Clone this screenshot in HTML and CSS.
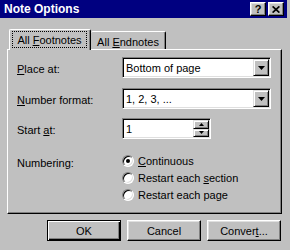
FILE: index.html
```html
<!DOCTYPE html>
<html>
<head>
<meta charset="utf-8">
<link rel="stylesheet" href="styles.css">
</head>
<body>
<div class="window">
  <div class="titlebar">
    <span class="title">Note Options</span>
    <div class="caption-btns">
      <span class="cbtn help">?</span>
      <span class="cbtn close"><svg width="8" height="7" viewBox="0 0 8 7"><path d="M0.6 0.4L7.4 6.6M7.4 0.4L0.6 6.6" stroke="#000" stroke-width="1.7" fill="none"/></svg></span>
    </div>
  </div>
  <div class="tabs">
    <div class="tab active"><span class="focus"><span>All <u>F</u>ootnotes</span></span></div>
    <div class="tab second"><span>All <u>E</u>ndnotes</span></div>
  </div>
  <div class="panel">
    <div class="row r1">
      <span class="lbl"><u>P</u>lace at:</span>
      <div class="field combo"><span class="val">Bottom of page</span><span class="drop"><svg width="7" height="4" viewBox="0 0 7 4"><path d="M0 0H7L3.5 4Z" fill="#000"/></svg></span></div>
    </div>
    <div class="row r2">
      <span class="lbl"><u>N</u>umber format:</span>
      <div class="field combo"><span class="val">1, 2, 3, ...</span><span class="drop"><svg width="7" height="4" viewBox="0 0 7 4"><path d="M0 0H7L3.5 4Z" fill="#000"/></svg></span></div>
    </div>
    <div class="row r3">
      <span class="lbl">Start <u>a</u>t:</span>
      <div class="field spin"><span class="val">1</span>
        <span class="spins">
          <span class="sbtn up"><svg width="5" height="3" viewBox="0 0 5 3"><path d="M0 3H5L2.5 0Z" fill="#000"/></svg></span>
          <span class="sbtn down"><svg width="5" height="3" viewBox="0 0 5 3"><path d="M0 0H5L2.5 3Z" fill="#000"/></svg></span>
        </span>
      </div>
    </div>
    <div class="row numbering">
      <span class="lbl">Numbering:</span>
      <div class="radios">
        <div class="radio"><span class="circle on"></span><span><u>C</u>ontinuous</span></div>
        <div class="radio"><span class="circle"></span><span>Restart each <u>s</u>ection</span></div>
        <div class="radio"><span class="circle"></span><span>Restart each pa<u>g</u>e</span></div>
      </div>
    </div>
  </div>
  <div class="buttons">
    <div class="btn default"><span>OK</span></div>
    <div class="btn"><span>Cancel</span></div>
    <div class="btn"><span>Conver<u>t</u>...</span></div>
  </div>
</div>
</body>
</html>
```
FILE: styles.css
```css
body {
  margin: 0;
  background: #c0c0c0;
  font-family: "Liberation Sans", Arial, sans-serif;
  font-size: 11px;
  color: #000;
}

.window {
  width: 290px;
  height: 250px;
  background: #c0c0c0;
  overflow: hidden;
}

.titlebar {
  height: 18px;
  margin-right: 3px;
  background: #000080;
  display: flex;
  align-items: center;
  justify-content: space-between;
  padding: 0 3px 0 4px;
}

.title {
  color: #fff;
  font-weight: bold;
  font-size: 12px;
}

.caption-btns {
  display: flex;
  gap: 2px;
}

.cbtn {
  box-sizing: border-box;
  width: 16px;
  height: 14px;
  background: #c0c0c0;
  border: 1px solid;
  border-color: #fff #000 #000 #fff;
  box-shadow: inset -1px -1px #808080, inset 1px 1px #dfdfdf;
  display: flex;
  align-items: center;
  justify-content: center;
}

.help {
  font-weight: bold;
  font-size: 11px;
  line-height: 12px;
}

.tabs {
  display: flex;
  align-items: flex-end;
  height: 21px;
  margin: 11px 0 -1px 9px;
  position: relative;
  z-index: 1;
}

.tab {
  box-sizing: border-box;
  height: 18px;
  margin-bottom: 1px;
  background: #c0c0c0;
  border-top: 1px solid #fff;
  border-left: 1px solid #fff;
  border-right: 1px solid #000;
  box-shadow: inset -1px 0 #808080;
  border-radius: 2px 2px 0 0;
  display: flex;
  justify-content: center;
  align-items: center;
}

.tab.active {
  width: 82px;
  height: 21px;
  margin-bottom: 0;
  align-items: flex-start;
  justify-content: flex-start;
  padding-top: 1px;
}

.tab.second {
  width: 75px;
  padding-top: 2px;
  border-left: none;
}

.focus {
  box-sizing: border-box;
  width: 75px;
  height: 17px;
  margin-left: 2px;
  border: 1px dotted #000;
  display: flex;
  align-items: center;
  justify-content: center;
  padding-top: 1px;
}

.panel {
  box-sizing: border-box;
  width: 275px;
  height: 165px;
  margin-left: 7px;
  border-top: 1px solid #fff;
  border-left: 1px solid #fff;
  border-right: 1px solid #000;
  border-bottom: 1px solid #000;
  box-shadow: inset -1px -1px #808080;
  padding: 7px 0 0 9px;
}

.row {
  display: flex;
  align-items: center;
  height: 21px;
}

.r1 { margin-bottom: 10px; }
.r2 { margin-bottom: 9px; }

.lbl {
  width: 105px;
  flex: none;
  padding-top: 3px;
}

.field {
  box-sizing: border-box;
  height: 21px;
  background: #fff;
  border: 1px solid;
  border-color: #808080 #fff #fff #808080;
  box-shadow: inset 1px 1px #000, inset -1px -1px #dfdfdf;
  display: flex;
  align-items: center;
  padding: 2px 1px 2px 3px;
}

.combo { width: 149px; }
.spin { width: 89px; }

.val { flex: 1; }

.drop {
  box-sizing: border-box;
  width: 16px;
  height: 17px;
  background: #c0c0c0;
  border: 1px solid;
  border-color: #dfdfdf #000 #000 #dfdfdf;
  box-shadow: inset 1px 1px #fff, inset -1px -1px #808080;
  display: flex;
  align-items: center;
  justify-content: center;
}

.spins {
  display: flex;
  flex-direction: column;
  width: 16px;
  height: 17px;
}

.sbtn {
  box-sizing: border-box;
  flex: 1;
  background: #c0c0c0;
  border: 1px solid;
  border-color: #dfdfdf #000 #000 #dfdfdf;
  box-shadow: inset 1px 1px #fff, inset -1px -1px #808080;
  display: flex;
  align-items: center;
  justify-content: center;
}

.numbering {
  align-items: flex-start;
  height: auto;
  margin-top: 13px;
}

.numbering .lbl {
  line-height: 17px;
  padding-top: 3px;
}

.radio {
  display: flex;
  align-items: center;
  height: 17px;
}

.circle {
  position: relative;
  box-sizing: border-box;
  width: 12px;
  height: 12px;
  margin-right: 4px;
  border-radius: 50%;
  background: #fff;
  border: 1px solid;
  border-color: #808080 #fff #fff #808080;
  box-shadow: inset 1px 1px #000, inset -1px -1px #dfdfdf;
}

.circle.on::after {
  content: "";
  position: absolute;
  left: 3px;
  top: 3px;
  width: 4px;
  height: 4px;
  border-radius: 50%;
  background: #000;
}

.buttons {
  display: flex;
  justify-content: flex-end;
  gap: 6px;
  margin-top: 6px;
  padding-right: 9px;
}

.btn {
  box-sizing: border-box;
  width: 74px;
  height: 21px;
  background: #c0c0c0;
  border: 1px solid;
  border-color: #fff #000 #000 #fff;
  box-shadow: inset -1px -1px #808080, inset 1px 1px #dfdfdf;
  display: flex;
  align-items: center;
  justify-content: center;
}

.btn.default {
  border: 1px solid #000;
  box-shadow: inset 1px 1px #fff, inset -1px -1px #000, inset -2px -2px #808080;
}
```
